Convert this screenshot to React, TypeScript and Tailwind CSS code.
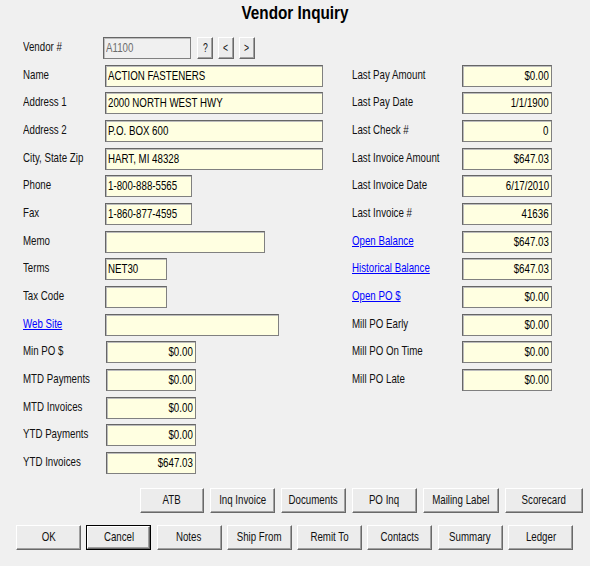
import type { ReactNode } from "react";
import clsx from "clsx";

// The source form uses a narrow system font; squeeze Liberation Sans to match.
function T({ children, className }: { children: ReactNode; className?: string }) {
  return (
    <span className={clsx("inline-block whitespace-nowrap scale-x-[0.72]", className ?? "origin-left")}>
      {children}
    </span>
  );
}

function Label({ text, link, width }: { text: string; link?: boolean; width: string }) {
  return (
    <div className={clsx("shrink-0 -mt-[2px]", width)}>
      <T className={clsx("origin-left", link ? "text-[#0000ff] underline" : "text-[#111]")}>{text}</T>
    </div>
  );
}

function Field({
  value = "",
  width,
  right,
  disabled,
}: {
  value?: string;
  width: string;
  right?: boolean;
  disabled?: boolean;
}) {
  return (
    <div
      className={clsx(
        "h-[22px] flex items-center border px-[2px] shadow-[inset_1px_1px_0_#bcbcbc]",
        "border-t-[#666] border-l-[#666] border-b-[#808080] border-r-[#808080]",
        disabled ? "bg-[#f0f0f0] text-[#6d6d6d]" : "bg-[#ffffe1] text-black",
        right ? "justify-end" : "justify-start",
        width,
      )}
    >
      {value && <T className={right ? "origin-right" : "origin-left"}>{value}</T>}
    </div>
  );
}

function Btn({ text, width, focused }: { text: string; width: string; focused?: boolean }) {
  return (
    <div className={clsx("h-[25px] shrink-0", width, focused ? "border border-black" : "")}>
      <div
        className={clsx(
          "h-full w-full flex items-center justify-center bg-[#ececec] text-[#111]",
          "border border-t-white border-l-white border-b-[#696969] border-r-[#696969]",
          "shadow-[inset_-1px_-1px_0_#a0a0a0]",
        )}
      >
        <T className="origin-center">{text}</T>
      </div>
    </div>
  );
}

const leftRows: { label: string; value?: string; w: string; right?: boolean; link?: boolean }[] = [
  { label: "Name", value: "ACTION FASTENERS", w: "w-[218px]" },
  { label: "Address 1", value: "2000 NORTH WEST HWY", w: "w-[218px]" },
  { label: "Address 2", value: "P.O. BOX 600", w: "w-[218px]" },
  { label: "City, State Zip", value: "HART, MI 48328", w: "w-[218px]" },
  { label: "Phone", value: "1-800-888-5565", w: "w-[87px]" },
  { label: "Fax", value: "1-860-877-4595", w: "w-[87px]" },
  { label: "Memo", w: "w-[160px]" },
  { label: "Terms", value: "NET30", w: "w-[62px]" },
  { label: "Tax Code", w: "w-[62px]" },
  { label: "Web Site", w: "w-[174px]", link: true },
  { label: "Min PO $", value: "$0.00", w: "w-[90px] ml-px", right: true },
  { label: "MTD Payments", value: "$0.00", w: "w-[90px] ml-px", right: true },
  { label: "MTD Invoices", value: "$0.00", w: "w-[90px] ml-px", right: true },
  { label: "YTD Payments", value: "$0.00", w: "w-[90px] ml-px", right: true },
  { label: "YTD Invoices", value: "$647.03", w: "w-[90px] ml-px", right: true },
];

const rightRows: { label: string; value: string; link?: boolean }[] = [
  { label: "Last Pay Amount", value: "$0.00" },
  { label: "Last Pay Date", value: "1/1/1900" },
  { label: "Last Check #", value: "0" },
  { label: "Last Invoice Amount", value: "$647.03" },
  { label: "Last Invoice Date", value: "6/17/2010" },
  { label: "Last Invoice #", value: "41636" },
  { label: "Open Balance", value: "$647.03", link: true },
  { label: "Historical Balance", value: "$647.03", link: true },
  { label: "Open PO $", value: "$0.00", link: true },
  { label: "Mill PO Early", value: "$0.00" },
  { label: "Mill PO On Time", value: "$0.00" },
  { label: "Mill PO Late", value: "$0.00" },
];

const topButtons = [
  { text: "ATB", w: "w-[64px]" },
  { text: "Inq Invoice", w: "w-[65px]" },
  { text: "Documents", w: "w-[65px]" },
  { text: "PO Inq", w: "w-[65px]" },
  { text: "Mailing Label", w: "w-[76px]" },
  { text: "Scorecard", w: "w-[78px]" },
];

const bottomButtons = ["OK", "Cancel", "Notes", "Ship From", "Remit To", "Contacts", "Summary", "Ledger"];

export default function App() {
  return (
    <div className="w-[590px] h-[566px] overflow-hidden bg-[#f0f0f0] font-['Liberation_Sans',Arial,sans-serif] text-[13.5px] leading-[16px]">
      {/* Title */}
      <div className="h-[37px] pt-[2px] text-center">
        <T className="origin-center scale-x-[0.85] text-[18px] leading-[22px] font-bold text-black">Vendor Inquiry</T>
      </div>

      {/* Form */}
      <div className="flex">
        <div className="ml-[23px] w-[329px] flex flex-col gap-[5.67px]">
          <div className="h-[22px] flex items-center">
            <Label text="Vendor #" width="w-[80px]" />
            <Field value="A1100" width="w-[88px]" disabled />
            <div className="flex gap-[5px] ml-[6px]">
              {["?", "<", ">"].map((s) => (
                <div
                  key={s}
                  className="w-[16px] h-[22px] flex items-center justify-center bg-[#ececec] border border-t-white border-l-white border-b-[#696969] border-r-[#696969] shadow-[inset_-1px_-1px_0_#a0a0a0] text-[#111] text-[12px]"
                >
                  <T className="origin-center">{s}</T>
                </div>
              ))}
            </div>
          </div>
          {leftRows.map((r) => (
            <div key={r.label} className="h-[22px] flex items-center">
              <Label text={r.label} width="w-[82px]" link={r.link} />
              <Field value={r.value} width={r.w} right={r.right} />
            </div>
          ))}
        </div>

        <div className="pt-[27.67px] flex flex-col gap-[5.67px]">
          {rightRows.map((r) => (
            <div key={r.label} className="h-[22px] flex items-center">
              <Label text={r.label} width="w-[110px]" link={r.link} />
              <Field value={r.value} width="w-[90px]" right />
            </div>
          ))}
        </div>
      </div>

      {/* Buttons */}
      <div className="mt-[14px] ml-[140px] flex gap-[6px]">
        {topButtons.map((b) => (
          <Btn key={b.text} text={b.text} width={b.w} />
        ))}
      </div>
      <div className="mt-[12px] ml-[16px] flex gap-[5.3px]">
        {bottomButtons.map((b) => (
          <Btn key={b} text={b} width="w-[65px]" focused={b === "Cancel"} />
        ))}
      </div>
    </div>
  );
}
